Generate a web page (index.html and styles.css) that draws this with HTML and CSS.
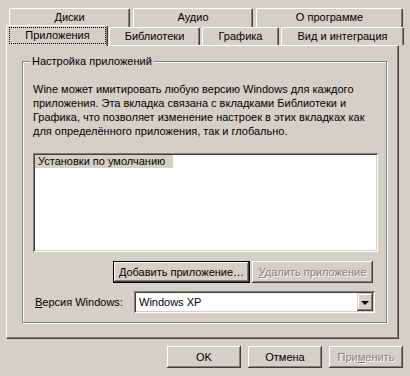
FILE: index.html
```html
<!DOCTYPE html>
<html lang="ru">
<head>
  <meta charset="UTF-8">
  <title>Настройка Wine</title>
  <link rel="stylesheet" href="styles.css">
</head>
<body>
  <div class="dialog">
    <div class="tab-row back">
      <div class="tab t-disks">Диски</div>
      <div class="tab t-audio">Аудио</div>
      <div class="tab t-about">О программе</div>
    </div>
    <div class="tab-row front">
      <div class="tab active t-apps"><span class="focus">Приложения</span></div>
      <div class="tab t-libs">Библиотеки</div>
      <div class="tab t-gfx">Графика</div>
      <div class="tab t-desk">Вид и интеграция</div>
    </div>

    <div class="page">
      <div class="group">
        <div class="group-title">Настройка приложений</div>
        <p class="desc">Wine может имитировать любую версию Windows для каждого приложения. Эта вкладка связана с вкладками Библиотеки и Графика, что позволяет изменение настроек в этих вкладках как для определённого приложения, так и глобально.</p>

        <div class="listbox sunken">
          <div class="item">Установки по умолчанию</div>
        </div>

        <div class="actions">
          <button class="btn default btn-add"><u>Д</u>обавить приложение…</button>
          <button class="btn btn-remove" disabled><u>У</u>далить приложение</button>
        </div>

        <div class="version">
          <label class="version-label"><u>В</u>ерсия Windows:</label>
          <div class="combo sunken">
            <span class="combo-value">Windows XP</span>
            <span class="combo-btn"><span class="arrow"></span></span>
          </div>
        </div>
      </div>
    </div>

    <div class="footer">
      <button class="btn">OK</button>
      <button class="btn">Отмена</button>
      <button class="btn" disabled>При<u>м</u>енить</button>
    </div>
  </div>
</body>
</html>
```

FILE: styles.css
```css
:root {
  --face: #d4d0c8;
  --light: #ffffff;
  --shadow: #808080;
  --dark: #404040;
}

* {
  box-sizing: border-box;
  margin: 0;
  padding: 0;
}

body {
  width: 410px;
  height: 376px;
  overflow: hidden;
  background: var(--face);
  color: #000;
  font-family: "Liberation Sans", Arial, sans-serif;
  font-size: 11px;
}

.dialog {
  padding-top: 8px;
}

/* tabs */
.tab-row {
  display: flex;
}

.tab-row.back {
  height: 19px;
  padding-left: 9px;
  gap: 3px;
}

.tab-row.front {
  height: 18px;
  padding-left: 6px;
}

.tab {
  height: 100%;
  border-top: 1px solid var(--light);
  border-left: 1px solid var(--light);
  border-right: 1px solid var(--dark);
  border-radius: 2px 2px 0 0;
  box-shadow: inset -1px 0 var(--shadow);
  text-align: center;
  line-height: 17px;
  background: var(--face);
}

.t-disks { width: 121px; }
.t-audio { width: 120px; }
.t-about { width: 147px; }

.t-apps { width: 102px; }
.t-libs { width: 91px; margin-left: 1px; }
.t-gfx { width: 77px; margin-left: 2px; }
.t-desk { width: 123px; margin-left: 2px; }

.tab.active {
  position: relative;
  z-index: 1;
  height: 21px;
  margin-top: -2px;
}

.focus {
  display: block;
  width: 97px;
  height: 17px;
  margin: 1px 0 0 2px;
  border: 1px dotted #000;
  line-height: 15px;
}

/* tab page */
.page {
  width: 393px;
  height: 294px;
  margin-left: 6px;
  border-top: 1px solid var(--light);
  border-left: 1px solid var(--light);
  border-right: 1px solid var(--dark);
  border-bottom: 1px solid var(--dark);
  box-shadow: inset -1px -1px var(--shadow);
  padding: 15px 0 0 15px;
}

.group {
  width: 365px;
  height: 262px;
  border: 1px solid var(--shadow);
  box-shadow: inset 1px 1px var(--light), 1px 1px var(--light);
  padding: 0 0 0 10px;
}

.group-title {
  width: fit-content;
  margin: -7px 0 0 -3px;
  padding: 0 2px;
  line-height: 13px;
  background: var(--face);
}

.desc {
  margin-top: 14px;
  width: 340px;
  line-height: 14px;
}

.sunken {
  background: #fff;
  box-shadow: inset 1px 1px var(--shadow), inset -1px -1px var(--light),
    inset 2px 2px var(--dark), inset -2px -2px var(--face);
}

.listbox {
  width: 345px;
  height: 99px;
  margin-top: 15px;
  padding: 2px;
}

.item {
  width: 138px;
  height: 13px;
  padding-left: 3px;
  line-height: 13px;
  background: var(--face);
}

/* buttons */
.btn {
  height: 22px;
  font: inherit;
  color: #000;
  background: var(--face);
  border: none;
  box-shadow: inset -1px -1px var(--dark), inset 1px 1px var(--light),
    inset -2px -2px var(--shadow), inset 2px 2px var(--face);
}

.btn.default {
  border: 1px solid #000;
  box-shadow: inset -1px -1px var(--dark), inset 1px 1px var(--light),
    inset -2px -2px var(--shadow);
}

.btn:disabled {
  color: var(--shadow);
  text-shadow: 1px 1px var(--light);
}

.actions {
  display: flex;
  gap: 2px;
  margin-top: 9px;
  padding-left: 80px;
}

.btn-add { width: 137px; }
.btn-remove { width: 121px; }

.version {
  display: flex;
  align-items: center;
  margin-top: 8px;
}

.version-label {
  width: 99px;
  margin-left: 2px;
}

.combo {
  display: flex;
  align-items: center;
  justify-content: space-between;
  width: 241px;
  height: 22px;
  padding: 2px;
}

.combo-value {
  padding-left: 3px;
}

.combo-btn {
  display: flex;
  align-items: center;
  justify-content: center;
  width: 16px;
  height: 18px;
  background: var(--face);
  box-shadow: inset -1px -1px var(--dark), inset 1px 1px var(--face),
    inset -2px -2px var(--shadow), inset 2px 2px var(--light);
}

.arrow {
  width: 0;
  height: 0;
  margin-top: 1px;
  border-left: 4px solid transparent;
  border-right: 4px solid transparent;
  border-top: 4px solid #000;
}

.footer {
  display: flex;
  gap: 7px;
  margin-top: 7px;
  padding-left: 167px;
}

.footer .btn {
  width: 74px;
}
```
